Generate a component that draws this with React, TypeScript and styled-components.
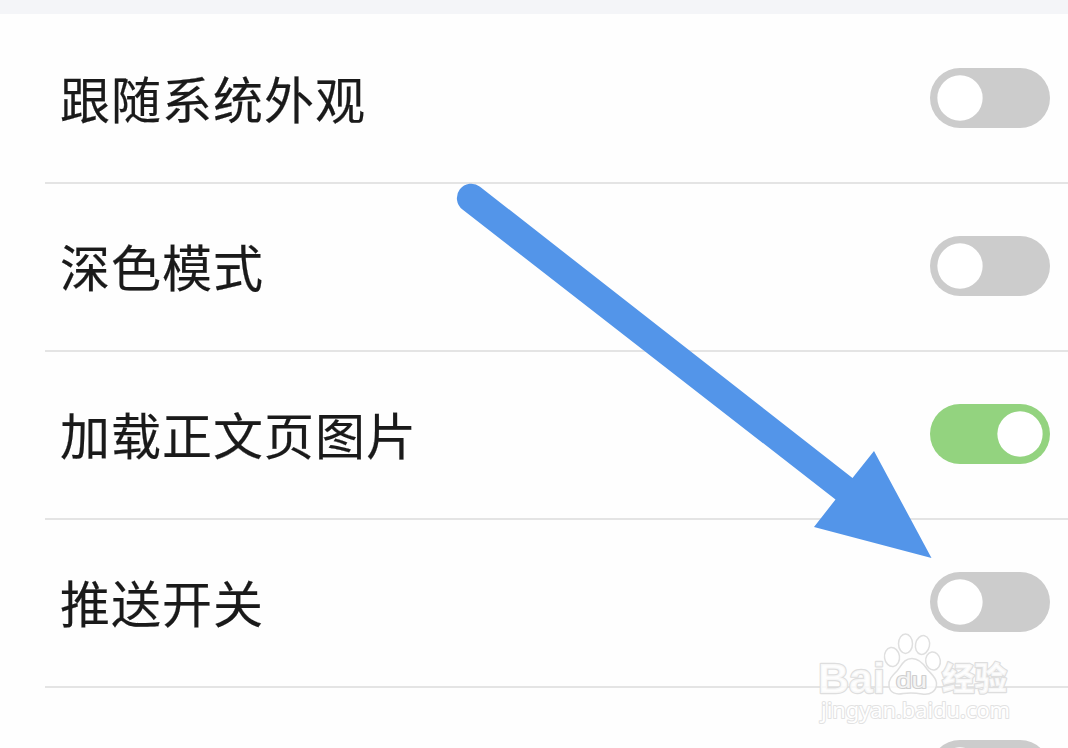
import React from "react";
import styled, { createGlobalStyle } from "styled-components";

const GlobalStyle = createGlobalStyle`
  body {
    margin: 0;
    background: #fefefe;
    overflow: hidden;
  }
`;

const Screen = styled.main`
  position: relative;
  width: 1068px;
  height: 748px;
  overflow: hidden;
  background: #fefefe;
  font-family: "Noto Sans CJK SC", "Noto Sans", sans-serif;
`;

const SectionGap = styled.div`
  height: 14px;
  background: #f4f5f8;
`;

const List = styled.ul`
  margin: 0;
  padding: 0 0 0 45px;
  list-style: none;
`;

const Row = styled.li`
  display: flex;
  align-items: center;
  justify-content: space-between;
  box-sizing: border-box;
  height: 168px;
  padding: 0 18px 0 15px;

  & + & {
    box-shadow: inset 0 2px 0 #e4e4e4;
  }
`;

const Label = styled.span`
  padding-bottom: 2px;
  font-size: 50px;
  letter-spacing: 1px;
  line-height: 74px;
  color: #1a1a1a;
  -webkit-text-stroke: 0.2px #1a1a1a;
  white-space: nowrap;
`;

const Switch = styled.button<{ $on: boolean }>`
  display: flex;
  align-items: center;
  justify-content: ${({ $on }) => ($on ? "flex-end" : "flex-start")};
  flex: none;
  width: 120px;
  height: 60px;
  padding: 0 7px;
  border: 0;
  border-radius: 30px;
  background: ${({ $on }) => ($on ? "#93d37f" : "#cccccc")};
`;

const Knob = styled.span`
  width: 46px;
  height: 46px;
  border-radius: 50%;
  background: #fff;
  transform: scale(0.985);
`;

const Overlay = styled.svg`
  position: absolute;
  inset: 0;
  pointer-events: none;
`;

const settings = [
  { label: "跟随系统外观", on: false },
  { label: "深色模式", on: false },
  { label: "加载正文页图片", on: true },
  { label: "推送开关", on: false },
  { label: "", on: false },
];

function Arrow() {
  return (
    <path
      d="M480 186.700L852.500 478L874 451L931.500 558L814 527L835.500 499.500L462.500 209.500A13.700 13.700 0 0 1 480 186.700Z"
      fill="#5395e9"
    />
  );
}

function Watermark() {
  return (
    <g
      fill="#ffffff"
      fillOpacity="0.8"
      stroke="#dedede"
      strokeWidth="2"
      strokeLinejoin="round"
      paintOrder="stroke"
    >
      <text
        x="818" y="692.500" fontSize="43" fontWeight="700" textLength="67" lengthAdjust="spacingAndGlyphs"
        fontFamily='"Liberation Sans", Arial, sans-serif' strokeWidth="2.400"
      >Bai</text>
      <g strokeWidth="1.500" paintOrder="normal" stroke="#dfdfdf">
        <ellipse cx="892" cy="657" rx="7.500" ry="9.500" transform="rotate(-8 892 657)" />
        <ellipse cx="905.500" cy="643.700" rx="7" ry="9.700" />
        <ellipse cx="922.500" cy="645" rx="7" ry="9.500" transform="rotate(12 922.500 645)" />
        <ellipse cx="933" cy="661" rx="7.300" ry="9" transform="rotate(-8 933 661)" />
        <path d="M912 658.500C904 658.500 902 665 897 671C892 676 888 680 889 686C890 693 896 695 903 693.500C910 692.500 914 692.500 922 694C930 695.500 937 691 936.500 683C936 677 931 674 927 669C923 663 919 658.500 912 658.500Z" />
      </g>
      <text
        x="896" y="688" fontSize="21.500" textLength="31" lengthAdjust="spacingAndGlyphs"
        fontFamily='"Liberation Sans", Arial, sans-serif' stroke="#cfcfcf"
      >du</text>
      <text
        x="942" y="689.500" fontSize="32" fontWeight="900" textLength="65" lengthAdjust="spacingAndGlyphs"
        fontFamily='"Noto Sans CJK SC", sans-serif' strokeWidth="2.400"
      >经验</text>
      <text
        x="821" y="718" fontSize="22" textLength="189" lengthAdjust="spacingAndGlyphs"
        fontFamily='"Noto Sans", sans-serif' stroke="#e2e2e2" fillOpacity="1"
      >jingyan.baidu.com</text>
    </g>
  );
}

export default function App() {
  return (
    <>
      <GlobalStyle />
      <Screen>
        <SectionGap />
        <List>
          {settings.map(({ label, on }, index) => (
            <Row key={index}>
              <Label>{label}</Label>
              <Switch type="button" role="switch" aria-checked={on} $on={on}>
                <Knob />
              </Switch>
            </Row>
          ))}
        </List>
        <Overlay width="1068" height="748" viewBox="0 0 1068 748">
          <Arrow />
          <Watermark />
        </Overlay>
      </Screen>
    </>
  );
}
